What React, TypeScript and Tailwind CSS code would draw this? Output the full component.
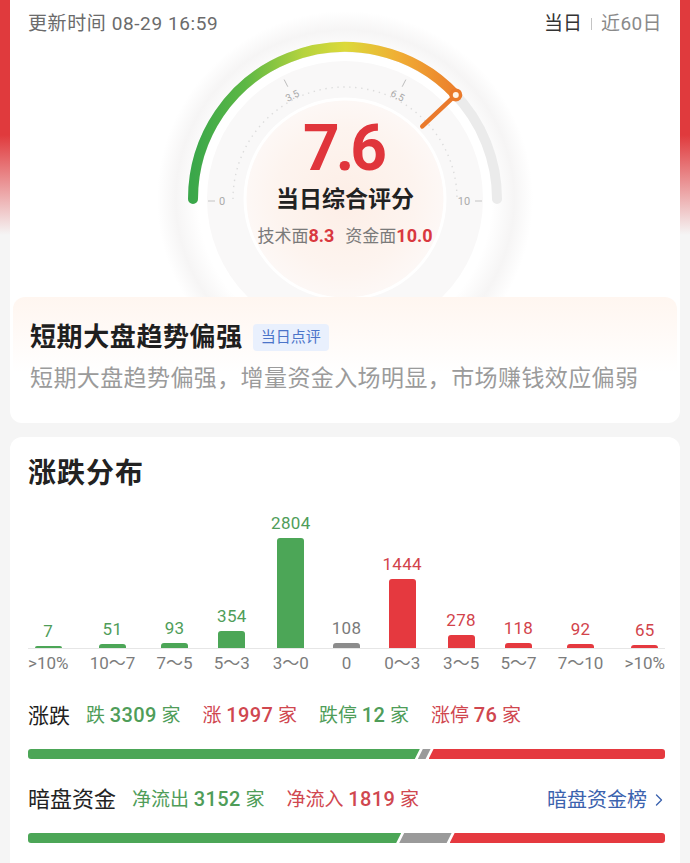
import React from "react";
import { ChevronRight } from "lucide-react";

type Tone = "g" | "n" | "r";

const dist: { label: string; value: number; h: number; c: Tone }[] = [
  { label: ">10%", value: 7, h: 2, c: "g" },
  { label: "10～7", value: 51, h: 4, c: "g" },
  { label: "7～5", value: 93, h: 5, c: "g" },
  { label: "5～3", value: 354, h: 17, c: "g" },
  { label: "3～0", value: 2804, h: 110, c: "g" },
  { label: "0", value: 108, h: 5, c: "n" },
  { label: "0～3", value: 1444, h: 69, c: "r" },
  { label: "3～5", value: 278, h: 13, c: "r" },
  { label: "5～7", value: 118, h: 5, c: "r" },
  { label: "7～10", value: 92, h: 4, c: "r" },
  { label: ">10%", value: 65, h: 3, c: "r" },
];

const barBg: Record<Tone, string> = {
  g: "bg-[#4ca657]",
  n: "bg-[#8c8c8c]",
  r: "bg-[#e5393f]",
};
const valText: Record<Tone, string> = {
  g: "text-[#4f9d59]",
  n: "text-[#7a7a7a]",
  r: "text-[#d2434b]",
};

function Gauge() {
  const cx = 210;
  const cy = 170;
  const r = 152;
  const score = 7.6;
  const theta = Math.PI * (1 - score / 10);
  const ex = cx + r * Math.cos(theta);
  const ey = cy - r * Math.sin(theta);
  const nr = r - 46;
  const nx = cx + nr * Math.cos(theta);
  const ny = cy - nr * Math.sin(theta);
  const ticks = [3.5, 6.5].map((v) => {
    const a = Math.PI * (1 - v / 10);
    const deg = 90 - (a * 180) / Math.PI;
    return {
      v,
      deg,
      t1: [cx + 126 * Math.cos(a), cy - 126 * Math.sin(a)],
      t2: [cx + 134 * Math.cos(a), cy - 134 * Math.sin(a)],
      l: [cx + 116 * Math.cos(a), cy - 116 * Math.sin(a)],
    };
  });
  const dr = 112;
  return (
    <svg
      width="420"
      height="300"
      viewBox="0 0 420 300"
      className="absolute left-1/2 top-[-16px] -ml-[210px] overflow-visible"
    >
      <defs>
        <radialGradient id="halo" cx="0.5" cy="0.5" r="0.5">
          <stop offset="0.78" stopColor="#ffffff" />
          <stop offset="0.9" stopColor="#f6f5f5" />
          <stop offset="1" stopColor="#ffffff" />
        </radialGradient>
        <radialGradient id="peach" cx="0.5" cy="0.5" r="0.5">
          <stop offset="0" stopColor="#fdeee6" />
          <stop offset="0.7" stopColor="#fdf4ef" />
          <stop offset="1" stopColor="#fdf8f6" />
        </radialGradient>
        <linearGradient id="arcg" gradientUnits="userSpaceOnUse" x1={cx - r} y1="0" x2={ex} y2="0">
          <stop offset="0" stopColor="#3aa74a" />
          <stop offset="0.2" stopColor="#5db844" />
          <stop offset="0.42" stopColor="#b5d33e" />
          <stop offset="0.58" stopColor="#dcd93a" />
          <stop offset="0.78" stopColor="#f0ae34" />
          <stop offset="1" stopColor="#ec7f2c" />
        </linearGradient>
      </defs>
      <circle cx={cx} cy={cy} r={188} fill="url(#halo)" />
      <circle cx={cx} cy={cy} r={138} fill="#f9f8f8" />
      <circle cx={cx} cy={cy} r={100} fill="url(#peach)" stroke="#ffffff" strokeWidth="3" />
      <path
        d={`M ${cx - dr} ${cy} A ${dr} ${dr} 0 0 1 ${cx + dr} ${cy}`}
        fill="none"
        stroke="#dcdcdc"
        strokeWidth="1.4"
        strokeDasharray="1.4 4.6"
      />
      <path
        d={`M ${cx - r} ${cy} A ${r} ${r} 0 0 1 ${cx + r} ${cy}`}
        fill="none"
        stroke="#ebebeb"
        strokeWidth="10"
        strokeLinecap="round"
      />
      <path
        d={`M ${cx - r} ${cy} A ${r} ${r} 0 0 1 ${ex} ${ey}`}
        fill="none"
        stroke="url(#arcg)"
        strokeWidth="10"
        strokeLinecap="round"
      />
      {ticks.map((t) => (
        <g key={t.v}>
          <line x1={t.t1[0]} y1={t.t1[1]} x2={t.t2[0]} y2={t.t2[1]} stroke="#bdbdbd" strokeWidth="1" />
          <text
            x={t.l[0]}
            y={t.l[1]}
            fontSize="10"
            fill="#ababab"
            textAnchor="middle"
            dominantBaseline="central"
            fontFamily="Roboto, sans-serif"
            transform={`rotate(${t.deg} ${t.l[0]} ${t.l[1]})`}
          >
            {t.v}
          </text>
        </g>
      ))}
      <line x1="73" y1="172" x2="80" y2="172" stroke="#c4c4c4" strokeWidth="1" />
      <text x="87" y="172" fontSize="11" fill="#ababab" textAnchor="middle" dominantBaseline="central" fontFamily="Roboto, sans-serif">
        0
      </text>
      <text x="329" y="172" fontSize="11" fill="#ababab" textAnchor="middle" dominantBaseline="central" fontFamily="Roboto, sans-serif">
        10
      </text>
      <line x1="340" y1="172" x2="347" y2="172" stroke="#c4c4c4" strokeWidth="1" />
      <line x1={ex} y1={ey} x2={nx} y2={ny} stroke="#ea7a2c" strokeWidth="4.5" strokeLinecap="round" />
      <circle cx={ex} cy={ey} r="6.5" fill="#ea7a2c" />
      <circle cx={ex} cy={ey} r="3" fill="#fff4e8" />
    </svg>
  );
}

function SplitBar({ parts }: { parts: { v: number; cls: string }[] }) {
  return (
    <div className="flex h-[10px] w-full">
      {parts.map((p, i) => {
        const first = i === 0;
        const last = i === parts.length - 1;
        const clip = first
          ? "[clip-path:polygon(0_0,100%_0,calc(100%-5px)_100%,0_100%)] rounded-l-[3px]"
          : last
          ? "[clip-path:polygon(5px_0,100%_0,100%_100%,0_100%)] rounded-r-[3px] -ml-[2px]"
          : "[clip-path:polygon(5px_0,100%_0,calc(100%-5px)_100%,0_100%)] -ml-[2px]";
        return <div key={i} className={`${p.cls} ${clip} h-full`} style={{ flexGrow: p.v, flexBasis: 0 }} />;
      })}
    </div>
  );
}

function Num({ children }: { children: React.ReactNode }) {
  return <span className="text-[20px] font-medium tracking-[0.4px]">{children}</span>;
}

export default function App() {
  return (
    <div className="min-h-[863px] px-[10px] bg-[#f5f5f5] bg-[linear-gradient(to_bottom,#e03a3d_0px,#e03a3d_135px,#f5f5f5_235px)] font-[Roboto,'Noto_Sans_CJK_SC',sans-serif]">
      {/* Top card */}
      <div className="bg-white rounded-b-[12px] overflow-hidden">
        <div className="h-[45px] pt-[2px] px-[18px] flex items-center justify-between">
          <span className="text-[19px] leading-[24px] text-[#6b6b6b] tracking-[0.6px]">更新时间 08-29 16:59</span>
          <div className="flex items-center text-[19px] leading-[24px]">
            <span className="text-[#333333]">当日</span>
            <span className="mx-[9px] h-[12px] w-px bg-[#c4c4c4]" />
            <span className="text-[#8a8a8a] tracking-[0.4px]">近60日</span>
          </div>
        </div>

        <div className="relative h-[252px]">
          <Gauge />
          <div className="relative flex flex-col items-center pt-[72px]">
            <div className="text-[64px] leading-none font-bold text-[#e0353b] tracking-[-4px] pr-[4px]">7.6</div>
            <div className="mt-[5px] text-[23px] leading-[28px] font-bold text-[#222222]">当日综合评分</div>
            <div className="mt-[10px] flex items-baseline text-[17px] leading-[24px] text-[#7a7a7a]">
              <span>技术面</span>
              <span className="text-[18px] font-bold text-[#d9383f]">8.3</span>
              <span className="ml-[11px]">资金面</span>
              <span className="text-[18px] font-bold text-[#d9383f]">10.0</span>
            </div>
          </div>
        </div>

        <div className="relative mx-[3px] rounded-[12px] bg-[linear-gradient(to_bottom,#fff6f0_0%,#fffaf7_30%,#ffffff_60%)] px-[17px] pt-[24px] pb-[29px]">
          <div className="flex items-center">
            <span className="text-[26px] leading-[32px] font-bold text-[#1f1f1f] tracking-[0.6px]">短期大盘趋势偏强</span>
            <span className="ml-[10px] h-[27px] px-[8px] flex items-center rounded-[4px] bg-[#e9f0fd] text-[15px] text-[#4b74c9]">
              当日点评
            </span>
          </div>
          <div className="mt-[11px] text-[23px] leading-[30px] text-[#9b9b9b] tracking-[0.4px]">
            短期大盘趋势偏强，增量资金入场明显，市场赚钱效应偏弱
          </div>
        </div>
      </div>

      {/* Distribution card */}
      <div className="mt-[14px] bg-white rounded-t-[12px] pl-[18px] pr-[15px] pt-[20px] min-h-[426px]">
        <div className="text-[28px] leading-[34px] font-bold text-[#222222] tracking-[1px]">涨跌分布</div>

        <div className="flex justify-between bg-[linear-gradient(#e6e6e6,#e6e6e6)] bg-no-repeat bg-[length:100%_1px] bg-[position:0_157px]">
          {dist.map((d, i) => (
            <div key={i} className="flex flex-col items-center">
              <div className="h-[157px] flex flex-col items-center justify-end">
                <span className={`text-[17px] leading-[20px] tracking-[0.3px] ${valText[d.c]}`}>{d.value}</span>
                <div className={`mt-[5px] w-[27px] rounded-t-[3px] ${barBg[d.c]}`} style={{ height: d.h }} />
              </div>
              <div className="mt-[5px] text-[17px] leading-[20px] text-[#7c7c7c] whitespace-nowrap">{d.label}</div>
            </div>
          ))}
        </div>

        <div className="mt-[28px] flex items-center text-[19px] leading-[28px]">
          <span className="text-[21px] text-[#222222] mr-[16px]">涨跌</span>
          <div className="flex items-center gap-[22px]">
            <span className="text-[#4f9d59]">
              跌 <Num>3309</Num> 家
            </span>
            <span className="text-[#d0474f]">
              涨 <Num>1997</Num> 家
            </span>
            <span className="text-[#4f9d59]">
              跌停 <Num>12</Num> 家
            </span>
            <span className="text-[#d0474f]">
              涨停 <Num>76</Num> 家
            </span>
          </div>
        </div>
        <div className="mt-[19px]">
          <SplitBar
            parts={[
              { v: 3309, cls: "bg-[#4ca657]" },
              { v: 108, cls: "bg-[#9a9a9a]" },
              { v: 1997, cls: "bg-[#e5393f]" },
            ]}
          />
        </div>

        <div className="mt-[26px] flex items-center text-[19px] leading-[28px]">
          <span className="text-[22px] text-[#222222] mr-[16px]">暗盘资金</span>
          <div className="flex items-center gap-[22px]">
            <span className="text-[#4f9d59]">
              净流出 <Num>3152</Num> 家
            </span>
            <span className="text-[#d0474f]">
              净流入 <Num>1819</Num> 家
            </span>
          </div>
          <div className="ml-auto flex items-center text-[20px] text-[#3b62ae]">
            <span>暗盘资金榜</span>
            <ChevronRight size={20} strokeWidth={1.6} className="ml-[2px] -mr-[4px]" />
          </div>
        </div>
        <div className="mt-[19px]">
          <SplitBar
            parts={[
              { v: 3152, cls: "bg-[#4ca657]" },
              { v: 443, cls: "bg-[#9a9a9a]" },
              { v: 1819, cls: "bg-[#e5393f]" },
            ]}
          />
        </div>
      </div>
    </div>
  );
}
